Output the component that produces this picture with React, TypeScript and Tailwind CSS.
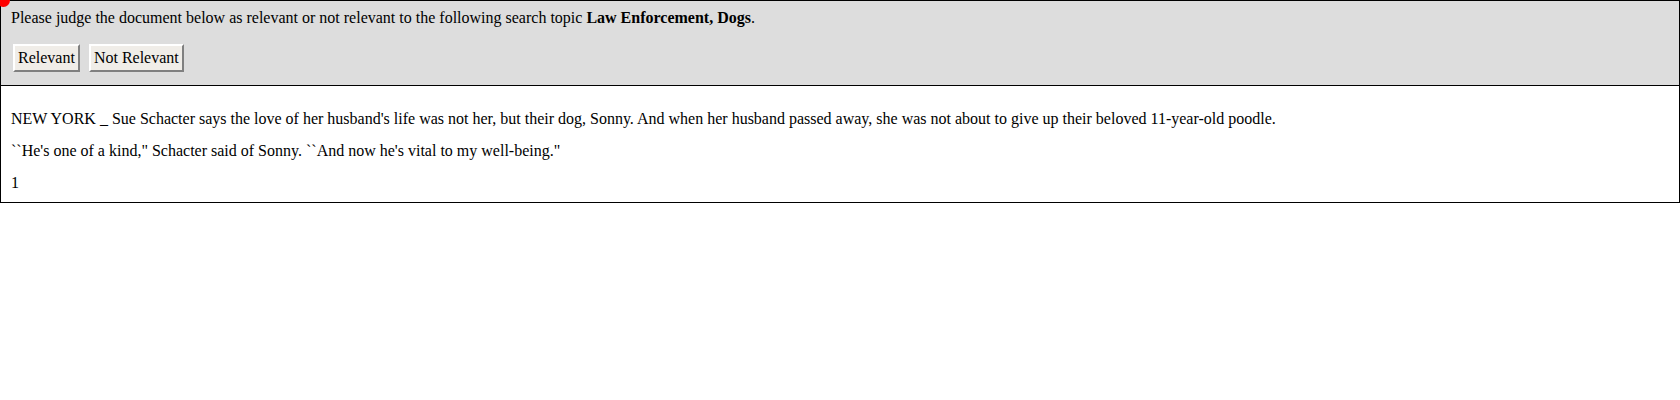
export default function App() {
  return (
    <div className="relative font-['Liberation_Serif',serif] text-[16px] leading-[18px] text-black">
      <div className="absolute -left-[3px] -top-[6px] h-[13px] w-[13px] rounded-full bg-[#ff0000]" />
      <div className="h-[86px] border border-black bg-[#dddddd] px-[10px] pt-[8px]">
        <p>
          Please judge the document below as relevant or not relevant to the following search topic{" "}
          <b>Law Enforcement, Dogs</b>.
        </p>
        <div className="mt-[17px] flex gap-[9px] pl-[2px]">
          <button className="h-[28px] border-[2px] border-t-[#ffffff] border-l-[#ffffff] border-b-[#808080] border-r-[#808080] bg-[#f0ede8] px-[3px]">
            Relevant
          </button>
          <button className="h-[28px] border-[2px] border-t-[#ffffff] border-l-[#ffffff] border-b-[#808080] border-r-[#808080] bg-[#f0ede8] px-[3px]">
            Not Relevant
          </button>
        </div>
      </div>
      <div className="border-x border-b border-black px-[10px] pt-[24px] pb-[10px]">
        <p>
          NEW YORK _ Sue Schacter says the love of her husband's life was not her, but their dog, Sonny. And when her husband passed away, she was not about to give up their beloved 11-year-old poodle.
        </p>
        <p className="mt-[14px]">``He's one of a kind," Schacter said of Sonny. ``And now he's vital to my well-being."</p>
        <p className="mt-[14px]">1</p>
      </div>
    </div>
  );
}
